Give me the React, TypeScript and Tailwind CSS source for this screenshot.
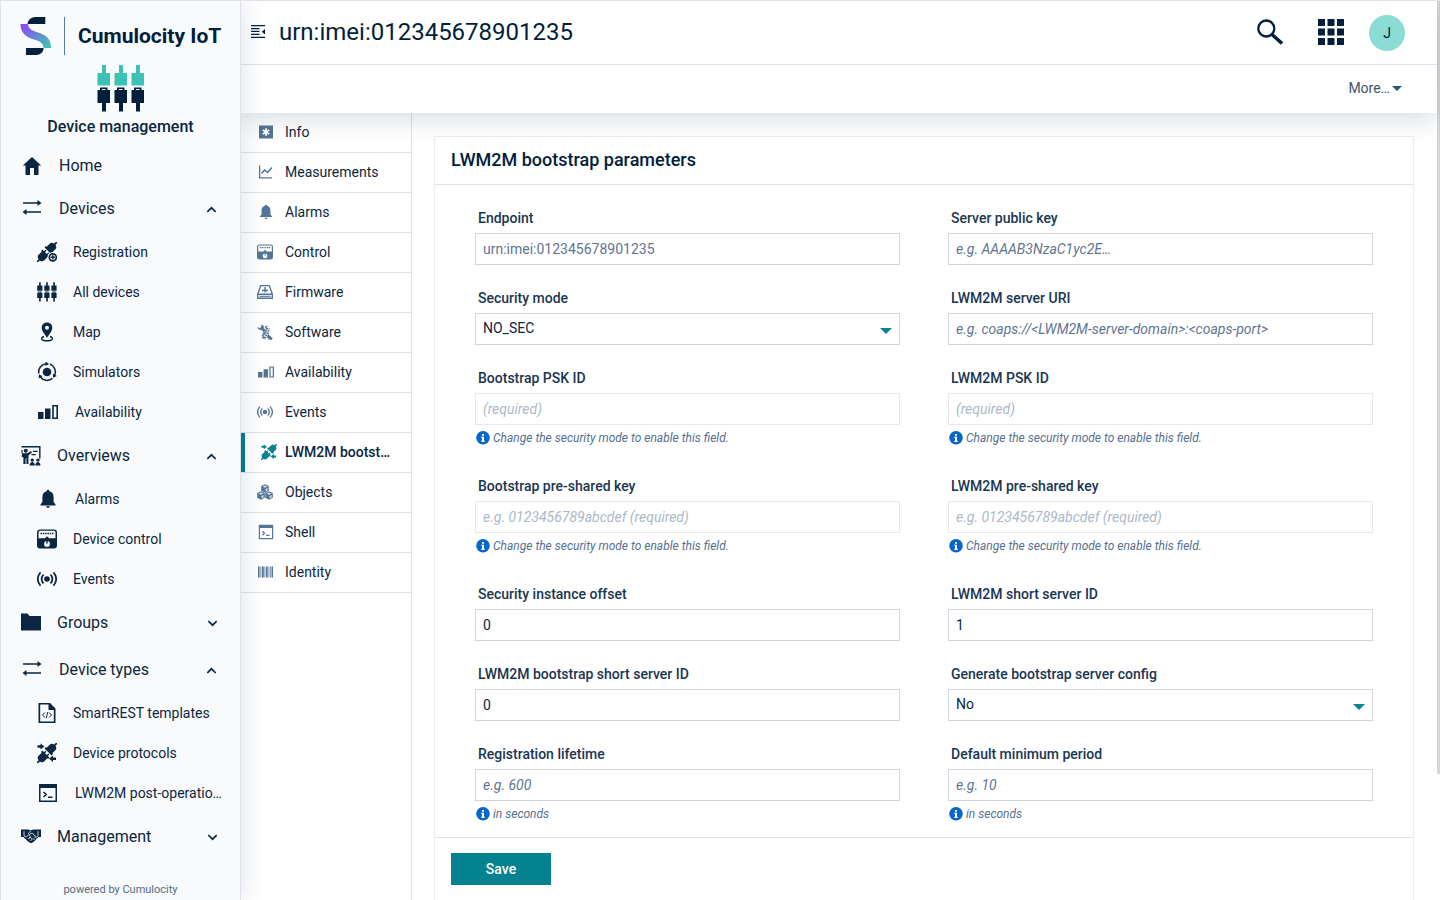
import React, { useState } from 'react';

type IconProps = { className?: string };

function DevicesIcon({ className, top = 'currentColor' }: IconProps & { top?: string }) {
  return (
    <svg className={className} viewBox="0 0 48 47" fill="currentColor">
      {[0, 17, 34].map((x) => (
        <g key={x} transform={`translate(${x} 0)`}>
          <path fill={top} d="M5 0h4v8h4v12.500H.500V8H5z" />
          <path d="M3 25v-2.500h7.500V25h2.500v13H9v8.500H5V38H.500V25zM5 25h3.500v-1H5z" />
        </g>
      ))}
    </svg>
  );
}

function Plug() {
  return (
    <g transform="rotate(-45 10 10)">
      <path d="M-4 9.100H-1Q-.500 6.500 1.500 6h5V5h2v2.300h2v1.400h-2v2.600h2v1.400h-2V15h-2v-1h-5q-2-.500-2.500-3.100h-3z" />
      <path d="M24 9.100h-3Q20.500 6.500 18.500 6h-5V5h-2v10h2v-1h5q2-.500 2.500-3.100h3z" />
    </g>
  );
}

function RegistrationIcon({ className }: IconProps) {
  return (
    <svg className={className} viewBox="0 0 20 20" fill="currentColor">
      <Plug />
      <circle cx="15.800" cy="15.300" r="5.400" fill="#f9fafc" />
      <circle cx="15.800" cy="15.300" r="3.500" fill="none" stroke="currentColor" strokeWidth="1.700" />
      <path d="M15.100 13.200h1.400v1.400h1.400v1.400h-1.400v1.400h-1.400V16h-1.400v-1.400h1.400z" />
    </svg>
  );
}

function ProtocolsIcon({ className }: IconProps) {
  return (
    <svg className={className} viewBox="0 0 20 20" fill="currentColor">
      <Plug />
      <path d="M.500 2.200h3V.500l4 3-4 3V4.800h-3zM19 14.500h-3v-2l-4 3.200 4 3.200v-2h3z" />
    </svg>
  );
}

function HomeIcon({ className }: IconProps) {
  return (
    <svg className={className} viewBox="0 0 20 20" fill="currentColor">
      <path d="M10 1 .800 9.500h2.700V19H8v-7h4v7h4.500V9.500h2.700z" />
    </svg>
  );
}

function ArrowsIcon({ className }: IconProps) {
  return (
    <svg className={className} viewBox="0 0 20 20" fill="currentColor">
      <path d="M1 3.200h14.500V1l4 3-4 3V4.800H1zM19 12.200H4.500V10l-4 3 4 3v-2.200H19z" />
    </svg>
  );
}

function MapIcon({ className }: IconProps) {
  return (
    <svg className={className} viewBox="0 0 20 20" fill="currentColor">
      <path fillRule="evenodd" d="M10 .500c-3.300 0-5.300 2.300-5.300 5.200C4.700 9 8 12 10 16c2-4 5.300-7 5.300-10.300C15.300 2.800 13.300.500 10 .500zm0 3.200a2 2 0 1 1 0 4 2 2 0 0 1 0-4z" />
      <path d="M7 14.500c-4 1.200-3 4.200 3 4.200s7-3 3-4.200" fill="none" stroke="currentColor" strokeWidth="1.400" />
    </svg>
  );
}

function SimulatorIcon({ className }: IconProps) {
  return (
    <svg className={className} viewBox="0 0 20 20" fill="currentColor">
      <circle cx="10" cy="10" r="4.300" />
      {[0, 120, 240].map((angle) => (
        <g key={angle} transform={`rotate(${angle} 10 10)`}>
          <path d="M1.700 11.500A8.400 8.400 0 0 1 9 1.700" fill="none" stroke="currentColor" strokeWidth="1.500" />
          <path d="M8.500-.500 12 1.900 8.500 4z" />
        </g>
      ))}
    </svg>
  );
}

function BarsIcon({ className }: IconProps) {
  return (
    <svg className={className} viewBox="0 0 20 20" fill="currentColor">
      <path d="M0 10h5.500v7H0zM7 6.500h5.500V17H7z" />
      <path fillRule="evenodd" d="M14.200 3H20v14h-5.800zm1.600 1.500v11h2.600v-11z" />
    </svg>
  );
}

function OverviewIcon({ className }: IconProps) {
  return (
    <svg className={className} viewBox="0 0 20 21" fill="currentColor">
      <path d="M0 0h20v13h-1.500V1.700H0z" />
      <circle cx="4.500" cy="5" r="2.100" />
      <path d="M1 7.700h5.500l3.500-2.400 1 1.500L7.300 10v8.800H5.200V13h-.900v5.800H2V12L0 11zM12 5h5v1.300h-5zM10.500 8.500H15v1.300h-4.500zM0 4h1.200v4H0z" />
      <circle cx="11.300" cy="14.800" r="1.800" />
      <circle cx="17.300" cy="14.800" r="1.800" />
      <path d="M8.500 20.500c0-5 5.600-5 5.600 0zM14.500 20.500c0-5 5.500-5 5.500 0z" />
    </svg>
  );
}

function BellIcon({ className }: IconProps) {
  return (
    <svg className={className} viewBox="0 0 20 20" fill="currentColor">
      <path d="M10 .800c.900 0 1.400.600 1.400 1.500 2.800.700 4.200 3 4.200 5.700v5l1.900 2.400v1H2.500v-1L4.400 13V8c0-2.700 1.400-5 4.200-5.700 0-.900.500-1.500 1.400-1.500zM8.200 17.300h3.600c0 1-.800 1.700-1.800 1.700s-1.800-.700-1.800-1.700z" />
    </svg>
  );
}

function ControlIcon({ className }: IconProps) {
  return (
    <svg className={className} viewBox="0 0 20 20" fill="currentColor">
      <path
        fillRule="evenodd"
        d="M3 .500h14Q20 .500 20 3.500v13q0 3-3 3H3q-3 0-3-3v-13q0-3 3-3zM2.800 1.800Q1.500 1.800 1.500 3.300V9.300h6.500L10 7.300l2 2h6.500V3.300Q18.500 1.800 17.200 1.800zM10 12a2.900 2.900 0 1 0 0 5.800 2.900 2.900 0 0 0 0-5.800z"
      />
      <path d="M3.500 4.500h13" stroke="currentColor" strokeWidth="1.600" strokeDasharray="1.500 .800" />
      <path d="M9.300 11.800h1.400v2.700H9.300z" />
    </svg>
  );
}

function EventsIcon({ className }: IconProps) {
  return (
    <svg className={className} viewBox="0 0 20 20" fill="none" stroke="currentColor" strokeWidth="1.700">
      <circle cx="10" cy="10" r="2.800" fill="currentColor" stroke="none" />
      <path d="M6.500 5.500q-3.800 4.500 0 9M13.500 5.500q3.800 4.500 0 9M3.500 3.200q-5.400 6.800 0 13.600M16.500 3.200q5.400 6.800 0 13.600" />
    </svg>
  );
}

function FolderIcon({ className }: IconProps) {
  return (
    <svg className={className} viewBox="0 0 20 20" fill="currentColor">
      <path d="M0 .500h6.500l2 2.500H20v14.500H0z" />
    </svg>
  );
}

function HandshakeIcon({ className }: IconProps) {
  return (
    <svg className={className} viewBox="0 0 20 20" fill="currentColor">
      <path d="M0 2.500h7l3 .800 3-.800h7v7.500h-2.500L13 14.500 10.800 16H9.300L7 14.500 2.500 10H0z" />
      <path
        d="M3 4.200v4.500L5.200 10l2.300-2 2 1.500-2 2.200 2-1.200 1.500 1.700-1.700 1.800M17 4.200v4.500l-1.500 1.500L11 6 8.500 7.500 7.300 6.300 10 3.800M11.500 11l2 2M13 9.500l2 2"
        fill="none"
        stroke="#f9fafc"
        strokeWidth=".800"
      />
    </svg>
  );
}

function CodeFileIcon({ className }: IconProps) {
  return (
    <svg className={className} viewBox="0 0 20 20" fill="currentColor">
      <path fillRule="evenodd" d="M1.500 0H13l5.500 5.500V20h-17zm1.700 1.600v16.800h13.600V7H11.500V1.600z" />
      <path d="M7.800 9.500 5.500 12l2.300 2.500M12.200 9.500l2.300 2.500-2.300 2.500M10.800 9l-1.600 6" fill="none" stroke="currentColor" strokeWidth="1" />
    </svg>
  );
}

function TerminalIcon({ className }: IconProps) {
  return (
    <svg className={className} viewBox="0 0 20 20" fill="currentColor">
      <path fillRule="evenodd" d="M1 1h18v18H1zm1.500 4v12.500h15V5z" />
      <path d="m5.500 9 2.700 2.500-2.700 2.500M10 14.300h4.500" fill="none" stroke="currentColor" strokeWidth="1.500" />
    </svg>
  );
}

function InfoIcon({ className }: IconProps) {
  return (
    <svg className={className} viewBox="0 0 16 16" fill="currentColor">
      <path d="M2 1.500h14v13H2z" />
      <path d="M9 4.300v7.400M5.800 6.100l6.400 3.800M12.200 6.100 5.800 9.900" stroke="#fff" strokeWidth="1.800" />
    </svg>
  );
}

function ChartIcon({ className }: IconProps) {
  return (
    <svg className={className} viewBox="0 0 16 16" fill="none" stroke="currentColor">
      <path d="M2.600 1.500v12.300H15" strokeWidth="1.300" />
      <path d="m4.500 9.500 3-3.500 3 2.500L15 3.500" strokeWidth="1.500" />
    </svg>
  );
}

function FirmwareIcon({ className }: IconProps) {
  return (
    <svg className={className} viewBox="0 0 16 16" fill="none" stroke="currentColor" strokeWidth="1.400">
      <path d="M3.700 1.600h8.600l3 8.400v4.200H.700V10zM.700 10.300h14.600M8 3v5.500M5 6.500h6" />
      <path d="M2.500 12.300h11" strokeWidth="1.100" />
    </svg>
  );
}

function SoftwareIcon({ className }: IconProps) {
  return (
    <svg className={className} viewBox="0 0 16 16" fill="currentColor">
      <path d="M4.200.500c2 .400 3 1.800 2.600 3.700l2 2-2 2-2.200-2.300C2.500 6.200.700 5.200.400 3L2.600 4.300l1.800-1.600zM11.500 10.500l4.300 3.800-1.200 1.400H12l-2.300-3z" />
      <path
        d="m8 3.500 3-1.500M8.500 5l4-.500M8 7l4.500 0M6.500 8.500l6 1M5.500 9.500l5.500 2.500M5 11l4 3M5 13l3 2"
        fill="none"
        stroke="currentColor"
        strokeWidth="1.500"
        strokeDasharray="2.500 .500"
      />
    </svg>
  );
}

function CubesIcon({ className }: IconProps) {
  return (
    <svg className={className} viewBox="0 0 16 16" fill="currentColor">
      {['translate(4 0)', 'translate(0 7)', 'translate(8 7)'].map((place) => (
        <g key={place} transform={place}>
          <path d="M4 .200 7.800 2v4.800L4 8.800.200 6.800V2z" />
          <path d="M1.500 2.600 4 3.800l2.500-1.200L4 1.500zM4.600 4.900v2.500l2-1V3.900z" fill="#fff" opacity=".75" />
        </g>
      ))}
    </svg>
  );
}

function BarcodeIcon({ className }: IconProps) {
  return (
    <svg className={className} viewBox="0 0 16 16" fill="currentColor">
      <path d="M1 2.500h1.600v11H1zM3.500 2.500h.800v11h-.800zM5 2.500h1.800v11H5zM7.500 2.500h.800v11h-.800zM9 2.500h1.700v11H9zM11.500 2.500h.800v11h-.800zM13 2.500h.700v11H13zM14.500 2.500H16v11h-1.500z" />
    </svg>
  );
}

function Chevron({ open }: { open: boolean }) {
  return (
    <svg className="mr-[23px] h-[10px] w-[10px] shrink-0" viewBox="0 0 10 10" fill="none" stroke="currentColor" strokeWidth="1.700">
      <path d={open ? 'm.300 8 4.200-4.200L8.700 8' : 'm1.300 3 4.200 4.200L9.700 3'} />
    </svg>
  );
}

type IconType = React.ComponentType<IconProps>;
type NavItem = { label: string; icon: IconType; wide?: boolean };
type NavSection = NavItem & { items?: NavItem[]; open?: boolean };

const SECTIONS: NavSection[] = [
  {
    label: 'Devices',
    icon: ArrowsIcon,
    wide: true,
    open: true,
    items: [
      { label: 'Registration', icon: RegistrationIcon },
      { label: 'All devices', icon: DevicesIcon },
      { label: 'Map', icon: MapIcon },
      { label: 'Simulators', icon: SimulatorIcon },
      { label: 'Availability', icon: BarsIcon, wide: true }
    ]
  },
  {
    label: 'Overviews',
    icon: OverviewIcon,
    open: true,
    items: [
      { label: 'Alarms', icon: BellIcon, wide: true },
      { label: 'Device control', icon: ControlIcon },
      { label: 'Events', icon: EventsIcon }
    ]
  },
  { label: 'Groups', icon: FolderIcon },
  {
    label: 'Device types',
    icon: ArrowsIcon,
    wide: true,
    open: true,
    items: [
      { label: 'SmartREST templates', icon: CodeFileIcon },
      { label: 'Device protocols', icon: ProtocolsIcon },
      { label: 'LWM2M post-operatio…', icon: TerminalIcon, wide: true }
    ]
  },
  { label: 'Management', icon: HandshakeIcon }
];

const TABS: NavItem[] = [
  { label: 'Info', icon: InfoIcon },
  { label: 'Measurements', icon: ChartIcon },
  { label: 'Alarms', icon: BellIcon, wide: true },
  { label: 'Control', icon: ControlIcon },
  { label: 'Firmware', icon: FirmwareIcon },
  { label: 'Software', icon: SoftwareIcon },
  { label: 'Availability', icon: BarsIcon, wide: true },
  { label: 'Events', icon: EventsIcon },
  { label: 'LWM2M bootst…', icon: ProtocolsIcon },
  { label: 'Objects', icon: CubesIcon },
  { label: 'Shell', icon: TerminalIcon, wide: true },
  { label: 'Identity', icon: BarcodeIcon }
];

type Field = {
  id: string;
  label: string;
  value?: string;
  placeholder?: string;
  options?: string[];
  help?: string;
  disabled?: boolean;
  readOnly?: boolean;
};

const LOCKED = 'Change the security mode to enable this field.';

const FIELDS: Field[] = [
  { id: 'endpoint', label: 'Endpoint', value: 'urn:imei:012345678901235', readOnly: true },
  { id: 'publicKey', label: 'Server public key', placeholder: 'e.g. AAAAB3NzaC1yc2E…' },
  { id: 'securityMode', label: 'Security mode', options: ['NO_SEC', 'PSK'] },
  { id: 'serverUri', label: 'LWM2M server URI', placeholder: 'e.g. coaps://<LWM2M-server-domain>:<coaps-port>' },
  { id: 'bootstrapPskId', label: 'Bootstrap PSK ID', placeholder: '(required)', help: LOCKED, disabled: true },
  { id: 'pskId', label: 'LWM2M PSK ID', placeholder: '(required)', help: LOCKED, disabled: true },
  { id: 'bootstrapKey', label: 'Bootstrap pre-shared key', placeholder: 'e.g. 0123456789abcdef (required)', help: LOCKED, disabled: true },
  { id: 'key', label: 'LWM2M pre-shared key', placeholder: 'e.g. 0123456789abcdef (required)', help: LOCKED, disabled: true },
  { id: 'offset', label: 'Security instance offset', value: '0' },
  { id: 'shortId', label: 'LWM2M short server ID', value: '1' },
  { id: 'bootstrapShortId', label: 'LWM2M bootstrap short server ID', value: '0' },
  { id: 'generate', label: 'Generate bootstrap server config', options: ['No', 'Yes'] },
  { id: 'lifetime', label: 'Registration lifetime', placeholder: 'e.g. 600', help: 'in seconds' },
  { id: 'minPeriod', label: 'Default minimum period', placeholder: 'e.g. 10', help: 'in seconds' }
];

function NavIcon({ icon: Icon, wide }: { icon: IconType; wide?: boolean }) {
  return (
    <span className={wide ? 'mr-4 flex w-[22px] shrink-0 justify-center' : 'mr-4 flex w-5 shrink-0 justify-center'}>
      <Icon className="h-5 w-5" />
    </span>
  );
}

function Section({ section }: { section: NavSection }) {
  const [open, setOpen] = useState(!!section.open);

  return (
    <li>
      <button type="button" onClick={() => setOpen(!open)} className="flex h-[47px] w-full items-center pl-5 text-left text-base">
        <NavIcon icon={section.icon} wide={section.wide} />
        <span className="grow">{section.label}</span>
        <Chevron open={open} />
      </button>
      {open && section.items && (
        <ul>
          {section.items.map((item) => (
            <li key={item.label}>
              <a href="#" className="flex h-10 items-center pl-9 text-sm whitespace-nowrap">
                <NavIcon icon={item.icon} wide={item.wide} />
                {item.label}
              </a>
            </li>
          ))}
        </ul>
      )}
    </li>
  );
}

function Sidebar() {
  return (
    <aside className="relative z-20 flex w-60 shrink-0 flex-col border-r border-[#dfe3e9] bg-[#f9fafc] shadow-[0_0_24px_rgba(4,32,64,0.14)]">
      <div className="mt-4 flex h-[38px] items-center pl-[19px]">
        <svg className="h-[38px] w-8 shrink-0" viewBox="0 0 32 38">
          <defs>
            <linearGradient id="logo" x1="0" y1="0" x2="1" y2="1">
              <stop offset="0.1" stopColor="#8b4df5" />
              <stop offset="0.9" stopColor="#44bfb6" />
            </linearGradient>
          </defs>
          <path fill="#011e3b" d="M7.500 7C8 3 11 0 15.500 0h9.800v7zM6 31h17.500c0 4-3 7-7.500 7H6z" />
          <path fill="url(#logo)" d="M.500 7H8c.500 5 4 6.500 10 8.500 8 2.500 13 6 13 15.500h-7.500c0-5-4-7-9.500-8.500C5.500 20 .500 15.500.500 7z" />
        </svg>
        <span className="ml-3 h-full w-px bg-[#5a7fa3]" />
        <span className="ml-[13px] text-[21px] leading-7 font-bold whitespace-nowrap text-[#011e3b]">Cumulocity IoT</span>
      </div>
      <DevicesIcon className="mx-auto mt-2.5 h-[47px] w-12 shrink-0 text-[#011e3b]" top="#3cc1b6" />
      <p className="mt-[3px] mb-[7px] text-center text-base font-medium">Device management</p>
      <nav>
        <ul>
          <li>
            <a href="#" className="flex h-[39px] items-center pl-5 text-base">
              <NavIcon icon={HomeIcon} wide />
              Home
            </a>
          </li>
          {SECTIONS.map((section) => (
            <Section key={section.label} section={section} />
          ))}
        </ul>
      </nav>
      <p className="mt-auto pb-0.5 text-center text-[11px] leading-4 text-[#566b85]">powered by Cumulocity</p>
    </aside>
  );
}

function FormField({ field }: { field: Field }) {
  return (
    <div>
      <label htmlFor={field.id} className="mb-[5px] block pl-[3px] text-sm font-medium text-[#1a3552]">
        {field.label}
      </label>
      {field.options ? (
        <div className="relative">
          <select
            id={field.id}
            className="block h-8 w-full appearance-none border border-[#d0d6e0] bg-white px-[7px] pb-0.5 text-sm text-[#0b2640]"
          >
            {field.options.map((option) => (
              <option key={option}>{option}</option>
            ))}
          </select>
          <svg className="pointer-events-none absolute top-[15px] right-2 h-1.5 w-3" viewBox="0 0 12 6" fill="#05828f">
            <path d="M0 0h12L6 6z" />
          </svg>
        </div>
      ) : (
        <input
          id={field.id}
          type="text"
          defaultValue={field.value}
          placeholder={field.placeholder}
          disabled={field.disabled}
          readOnly={field.readOnly}
          className="block h-8 w-full border border-[#d0d6e0] bg-white px-[7px] text-sm text-[#0b2640] placeholder:text-[#5f7590] placeholder:italic read-only:text-[#5f7590] disabled:border-[#e6e9ed] disabled:placeholder:text-[#adb9c8]"
        />
      )}
      {field.help && (
        <p className="mt-[5px] mb-[7px] flex items-center pl-px text-xs text-[#566f8f] italic">
          <svg className="mr-[3px] h-3.5 w-3.5 shrink-0" viewBox="0 0 14 14">
            <circle cx="7" cy="6.800" r="6.800" fill="#0766c9" />
            <path fill="#fff" d="M6 3h2v1.800H6zM5.300 5.700H8v4h.700V11H5.300V9.700H6V7h-.700z" />
          </svg>
          {field.help}
        </p>
      )}
    </div>
  );
}

export default function App() {
  const [active, setActive] = useState('LWM2M bootst…');

  return (
    <div className="relative flex h-screen overflow-hidden border-t border-l border-[#e1e3e6] bg-white pr-[3px] font-['Roboto',sans-serif] text-[#0b2640]">
      <Sidebar />

      <div className="flex min-w-0 grow flex-col">
        <header className="relative z-10 shrink-0 bg-white shadow-[0_6px_24px_rgba(4,32,64,0.16)]">
          <div className="flex h-16 items-center border-b border-[#dfe3e9] pr-8 pb-0.5 pl-2.5 text-[#011e3b]">
            <button type="button" aria-label="Toggle navigation">
              <svg className="h-[18px] w-3.5" viewBox="0 0 14 18" fill="currentColor">
                <path d="M0 2h14v1.300H0zM0 4.900h8.500v1.300H0zM0 7.800h8.500v1.300H0zM0 10.700h8.500V12H0zM0 13.700h14V15H0zM14 6v5.400l-3.200-2.700z" />
              </svg>
            </button>
            <h1 className="ml-3.5 grow text-2xl">urn:imei:012345678901235</h1>
            <button type="button" aria-label="Search">
              <svg className="h-[26px] w-[26px]" viewBox="0 0 26 26" fill="none" stroke="currentColor">
                <circle cx="9.300" cy="9.500" r="8" strokeWidth="2.300" />
                <path d="m15 15.500 10 9" strokeWidth="3.500" />
              </svg>
            </button>
            <button type="button" aria-label="Applications" className="ml-[35px]">
              <svg className="h-[26px] w-[26px]" viewBox="0 0 26 26" fill="currentColor">
                <path d="M0 0h7v7H0zM9.500 0h7v7h-7zM19 0h7v7h-7zM0 9.500h7v7H0zM9.500 9.500h7v7h-7zM19 9.500h7v7h-7zM0 19h7v7H0zM9.500 19h7v7h-7zM19 19h7v7h-7z" />
              </svg>
            </button>
            <button type="button" className="mt-0.5 ml-[25px] h-9 w-9 rounded-full bg-[#8bdcd4] text-sm">
              J
            </button>
          </div>
          <div className="flex h-12 items-center justify-end pr-[35px] pb-0.5">
            <button type="button" className="flex items-center gap-0.5 text-sm text-[#42546e]">
              More…
              <svg className="h-[5px] w-2.5" viewBox="0 0 10 5" fill="#2b5580">
                <path d="M0 0h10L5 5z" />
              </svg>
            </button>
          </div>
        </header>

        <div className="flex min-h-0 grow">
          <nav className="w-[171px] shrink-0 border-r border-[#dfe3e9]">
            <ul>
              {TABS.map(({ label, icon: Icon, wide }) => (
                <li key={label} className="border-b border-[#dfe3e9]">
                  <a
                    href="#"
                    onClick={() => setActive(label)}
                    className={
                      label === active
                        ? 'flex h-[39px] items-center border-l-4 border-[#05828f] pb-0.5 pl-4 text-sm font-medium whitespace-nowrap'
                        : 'flex h-[39px] items-center pb-0.5 pl-4 text-sm whitespace-nowrap'
                    }
                  >
                    <span className={label === active ? 'w-6 shrink-0 text-[#05828f]' : 'w-7 shrink-0 text-[#567596]'}>
                      <Icon className={wide ? 'ml-px h-4 w-4' : 'h-4 w-4'} />
                    </span>
                    {label}
                  </a>
                </li>
              ))}
            </ul>
          </nav>

          <main className="min-w-0 grow overflow-y-auto pt-6 pr-6 pb-6 pl-[23px] [scrollbar-width:none]">
            <form onSubmit={(e) => e.preventDefault()} className="bg-white shadow-[0_0_0_1px_#eceef1]">
              <h2 className="flex h-12 items-center border-b border-[#dfe3e9] px-4 pb-0.5 text-lg font-medium text-[#011e3b]">
                LWM2M bootstrap parameters
              </h2>
              <div className="grid grid-cols-2 gap-x-12 gap-y-[23px] px-10 pt-[23px] pb-2">
                {FIELDS.map((field) => (
                  <FormField key={field.id} field={field} />
                ))}
              </div>
              <div className="border-t border-[#e1e4e7] px-4 py-[15px]">
                <button type="submit" className="h-8 w-[100px] bg-[#05828f] text-sm font-medium text-white">
                  Save
                </button>
              </div>
            </form>
          </main>
        </div>
      </div>

      {/* Scroll thumb */}
      <div className="absolute top-0 right-0 h-[86%] w-[3px] bg-[#d3d7dc]" />
    </div>
  );
}
